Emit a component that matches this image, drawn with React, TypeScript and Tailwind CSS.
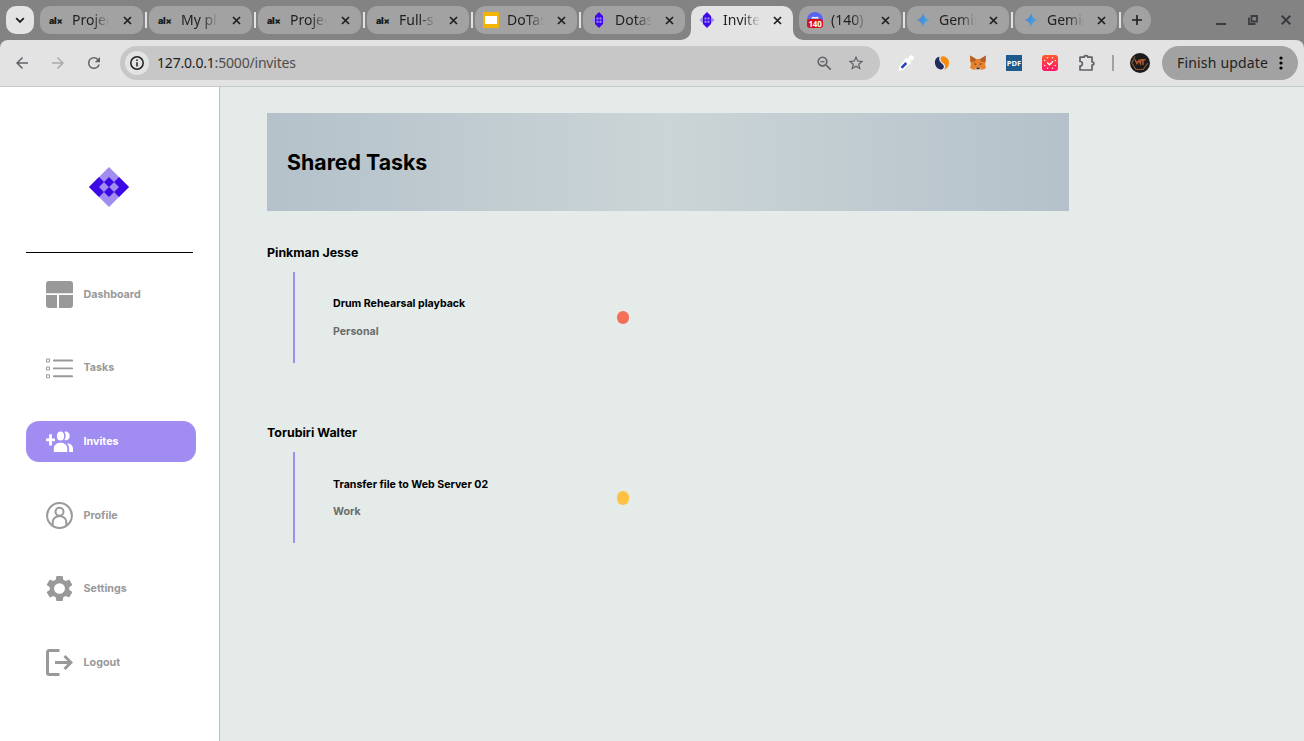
import React from "react";

const BROWSER = "font-['Noto_Sans',sans-serif]";

function AlxIcon() {
  return (
    <span className="w-4 h-4 pl-px flex items-center font-['Inter',sans-serif] font-black text-[9px] leading-none tracking-[-0.3px] text-[#151b1b]">
      al<span className="text-[9px]">×</span>
    </span>
  );
}

function SlidesIcon() {
  return (
    <svg className="w-4 h-4 block" viewBox="0 0 16 16">
      <rect width="16" height="16" rx="1" fill="#f5b400" />
      <rect x="2" y="4" width="12" height="8" fill="#fff" />
    </svg>
  );
}

function Diamond({ className }: { className: string }) {
  return (
    <svg className={className} viewBox="0 0 40 40" preserveAspectRatio="none">
      <path d="M20 0L40 20L20 40L0 20Z" fill="#a18cf2" />
      <path d="M10 10L20 20L10 30L0 20Z" fill="#3b0ae5" />
      <path d="M30 10L40 20L30 30L20 20Z" fill="#3b0ae5" />
      <path d="M15 15L20 20L15 25L10 20ZM25 15L30 20L25 25L20 20Z" fill="#a18cf2" />
      <path d="M20 10L25 15L20 20L15 15ZM20 20L25 25L20 30L15 25Z" fill="#3b0ae5" />
    </svg>
  );
}

function DiamondTabIcon() {
  return (
    <svg className="w-4 h-4 block" viewBox="0 0 16 16">
      <path d="M8 1L15.500 8L8 15L0.500 8Z" fill="#a18cf2" />
      <path d="M8 0L12 4V12L8 16L4 12V4Z" fill="#3b0ae5" />
      <path d="M5.500 5.500h2v2h-2zM8.500 5.500h2v2h-2zM5.500 8.700h2v2h-2zM8.500 8.700h2v2h-2z" fill="#a18cf2" />
    </svg>
  );
}

function DiscordIcon() {
  return (
    <span className="relative block w-4 h-4">
      <svg className="w-4 h-4 block" viewBox="0 0 16 16">
        <circle cx="8" cy="8" r="8" fill="#5865f2" />
        <path d="M4 6.500C5 4.600 6.200 4.400 7 4.900h2c1-.5 2.200-.3 3 1.600z" fill="#fff" />
      </svg>
      <span className="absolute left-0 top-[7px] w-4 h-[9px] rounded-[3px] bg-[#d80f16] text-white text-[8px] leading-[9px] tracking-[-0.2px] font-bold text-center">140</span>
    </span>
  );
}

function GeminiIcon() {
  return (
    <svg className="w-4 h-4 block" viewBox="0 0 16 16">
      <defs>
        <linearGradient id="gem" x1="0" y1="0" x2="1" y2="0.5">
          <stop offset="0.15" stopColor="#8b76c8" />
          <stop offset="0.5" stopColor="#3f8fdc" />
          <stop offset="1" stopColor="#55a8d8" />
        </linearGradient>
      </defs>
      <path d="M8 1C8.800 5 11 7.200 15 8C11 8.800 8.800 11 8 15C7.200 11 5 8.800 1 8C5 7.200 7.200 5 8 1Z" fill="url(#gem)" />
    </svg>
  );
}

type TabInfo = { title: string; icon: React.ReactNode; wide?: boolean; active?: boolean; sep?: boolean };

const tabs: TabInfo[] = [
  { title: "Projec", icon: <AlxIcon />, wide: true, sep: true },
  { title: "My pla", icon: <AlxIcon />, wide: true, sep: true },
  { title: "Projec", icon: <AlxIcon />, wide: true, sep: true },
  { title: "Full-s", icon: <AlxIcon />, sep: true },
  { title: "DoTas", icon: <SlidesIcon />, sep: true },
  { title: "Dotas", icon: <DiamondTabIcon /> },
  { title: "Invite", icon: <DiamondTabIcon />, active: true },
  { title: "(140) ", icon: <DiscordIcon />, sep: true },
  { title: "Gemin", icon: <GeminiIcon />, sep: true },
  { title: "Gemin", icon: <GeminiIcon />, sep: true },
];

function Tab({ tab }: { tab: TabInfo }) {
  return (
    <>
      <div
        className={`relative flex shrink-0 items-center pl-2 ${tab.wide ? "w-[103px]" : "w-[102px]"} ${
          tab.active ? "h-[34px] pb-[6px] rounded-t-[10px] bg-[#e3e3e3]" : "h-7 rounded-[10px] bg-[#a2a2a2]"
        }`}
      >
        {tab.active && (
          <>
            <svg className="absolute -left-[10px] bottom-0 w-[10px] h-[10px]" viewBox="0 0 10 10">
              <path d="M10 0V10H0A10 10 0 0 0 10 0Z" fill="#e3e3e3" />
            </svg>
            <svg className="absolute -right-[10px] bottom-0 w-[10px] h-[10px]" viewBox="0 0 10 10">
              <path d="M0 0V10H10A10 10 0 0 1 0 0Z" fill="#e3e3e3" />
            </svg>
          </>
        )}
        {tab.icon}
        <span className="ml-2 w-[37px] overflow-hidden whitespace-nowrap text-[14px] leading-5 text-[#1f1f1f] [mask-image:linear-gradient(to_right,#000_55%,transparent)]">
          {tab.title}
        </span>
        <svg className={`w-[9px] h-[9px] ${tab.wide ? "ml-[13.500px]" : "ml-[12.500px]"}`} viewBox="0 0 9 9">
          <path d="M1 1L8 8M8 1L1 8" stroke="#1f1f1f" strokeWidth="1.700" />
        </svg>
      </div>
      <div className="w-[6px] h-7 shrink-0 flex items-center justify-center">
        {tab.sep && <div className="w-[2px] h-4 bg-[#e3e3e3]" />}
      </div>
    </>
  );
}

function TabStrip() {
  return (
    <div className="flex h-10 bg-[#838383] pl-[6px] pt-[6px]">
      <div className="w-7 h-7 mr-[6px] shrink-0 rounded-[10px] bg-[#e3e3e3] flex items-center justify-center">
        <svg className="w-[10px] h-[7px]" viewBox="0 0 10 7">
          <path d="M1.200 1.200L5 5L8.800 1.200" fill="none" stroke="#1f1f1f" strokeWidth="1.800" />
        </svg>
      </div>
      {tabs.map((t, i) => (
        <Tab key={i} tab={t} />
      ))}
      <div className="w-7 h-7 shrink-0 rounded-full bg-[#a2a2a2] flex items-center justify-center">
        <svg className="w-[10px] h-[10px]" viewBox="0 0 10 10">
          <path d="M5 0V10M0 5H10" stroke="#1f1f1f" strokeWidth="1.600" />
        </svg>
      </div>
      <div className="ml-auto flex h-7 items-center pr-[13px]">
        <svg className="w-[10px] h-[10px]" viewBox="0 0 10 10">
          <path d="M0 9H10" stroke="#3b3c40" strokeWidth="2" />
        </svg>
        <svg className="ml-[22px] w-[10px] h-[10px]" viewBox="0 0 10 10">
          <path d="M1 2.500V9H7.500M3.500 1H9V6.500H3.500Z" fill="none" stroke="#3b3c40" strokeWidth="1.800" />
        </svg>
        <svg className="ml-[23px] w-[10px] h-[10px]" viewBox="0 0 10 10">
          <path d="M0.700 0.700L9.300 9.300M9.300 0.700L0.700 9.300" stroke="#3b3c40" strokeWidth="2" />
        </svg>
      </div>
    </div>
  );
}

function Material({ d, className }: { d: string; className: string }) {
  return (
    <svg className={className} viewBox="0 0 24 24" fill="currentColor">
      <path d={d} />
    </svg>
  );
}

const BACK = "M20 11H7.830l5.590-5.590L12 4l-8 8 8 8 1.410-1.410L7.830 13H20v-2z";
const FWD = "M12 4l-1.410 1.410L16.170 11H4v2h12.170l-5.580 5.590L12 20l8-8z";
const RELOAD =
  "M17.650 6.350A7.958 7.958 0 0 0 12 4a8 8 0 1 0 7.730 10h-2.080A6 6 0 1 1 12 6c1.660 0 3.140.69 4.220 1.780L13 11h7V4l-2.350 2.350z";
const ZOOM =
  "M15.500 14h-.79l-.28-.27A6.471 6.471 0 0 0 16 9.500 6.500 6.500 0 1 0 9.500 16c1.610 0 3.090-.59 4.230-1.570l.27.28v.79l5 4.990L20.490 19l-4.990-5zm-6 0C7.010 14 5 11.990 5 9.500S7.010 5 9.500 5 14 7.010 14 9.500 11.990 14 9.500 14zM7 8.700h5v1.600H7z";
const STAR =
  "M22 9.240l-7.190-.62L12 2 9.190 8.630 2 9.240l5.460 4.730L5.820 21 12 17.270 18.180 21l-1.630-7.030L22 9.240zM12 15.400l-3.760 2.270 1-4.280-3.320-2.880 4.380-.38L12 6.100l1.710 4.040 4.380.38-3.320 2.880 1 4.280L12 15.400z";
const GEAR =
  "M19.140 12.940c.04-.3.060-.61.060-.94 0-.32-.02-.64-.07-.94l2.030-1.580c.18-.14.23-.41.12-.61l-1.920-3.320c-.12-.22-.37-.29-.59-.22l-2.390.96c-.5-.38-1.030-.7-1.620-.94l-.36-2.540c-.04-.24-.24-.41-.48-.41h-3.840c-.24 0-.43.17-.47.41l-.36 2.540c-.59.24-1.130.57-1.620.94l-2.390-.96c-.22-.08-.47 0-.59.22L2.740 8.870c-.12.21-.08.47.12.61l2.030 1.580c-.05.3-.09.63-.09.94s.02.64.07.94l-2.030 1.580c-.18.14-.23.41-.12.61l1.920 3.320c.12.22.37.29.59.22l2.390-.96c.5.38 1.030.7 1.620.94l.36 2.540c.05.24.24.41.48.41h3.840c.24 0 .44-.17.47-.41l.36-2.540c.59-.24 1.130-.56 1.620-.94l2.390.96c.22.08.47 0 .59-.22l1.920-3.320c.12-.22.070-.47-.12-.61l-2.010-1.580z";

function Extensions() {
  return (
    <div className="flex items-center ml-[18px]">
      <svg className="w-4 h-4" viewBox="0 0 16 16">
        <path d="M8.500 4L12 7.500L5 14.300L1.500 15L2 11.500Z" fill="#fff" stroke="#fff" strokeWidth="1.500" strokeLinejoin="round" />
        <path d="M7.500 3.500L12.500 8.500M9.500 6.500L13 3" stroke="#fff" strokeWidth="2.800" />
        <circle cx="13.200" cy="2.800" r="2.500" fill="#fff" />
        <path d="M3.500 12.800L8.300 8" stroke="#2947b8" strokeWidth="2.600" />
      </svg>
      <svg className="w-4 h-4 ml-5" viewBox="0 0 16 16">
        <path d="M5.500 1.800C2 2.500 .6 5 1 8.500C1.500 12 4 14.500 7.500 14.500C10.600 13.500 10.500 10.800 8.300 9C5.500 6.800 4.500 4.500 5.500 1.800Z" fill="#1f2d5c" />
        <path d="M8 1.200C12 .8 15 4 15 7.500C15 11 13 14 10 14.600C12 12.500 11.500 10 9.500 8.300C6.500 6 5.500 3 8 1.200Z" fill="#f68b0c" />
      </svg>
      <svg className="w-[18px] h-4 ml-[19px]" viewBox="0 0 18 16">
        <path d="M1 .5L7 4H11L17 .5L17 6L16 9L17 13L13 15L10.500 14.500H7.500L5 15L1 13L2 9L1 6Z" fill="#e8812c" />
        <path d="M1 .5L7 4L6 6.500L2 7ZM17 .5L11 4L12 6.500L16 7Z" fill="#b0602c" />
        <path d="M5 8.300L7.500 9L6.500 10ZM13 8.300L10.500 9L11.500 10Z" fill="#24324a" />
        <path d="M5 14.600L7 12.300H11L13 14.600L11 15H7Z" fill="#d6b39a" />
        <path d="M7.500 12.500H10.500V14H7.500Z" fill="#33343b" />
      </svg>
      <div className="w-4 h-4 ml-[19px] bg-[#1f5a8c] text-white text-[7.500px] leading-4 font-bold text-center font-['Open_Sans',sans-serif]">PDF</div>
      <svg className="w-4 h-4 ml-5" viewBox="0 0 16 16">
        <defs>
          <linearGradient id="clk" x1="0" y1="0" x2="0" y2="1">
            <stop offset="0" stopColor="#ff5a2c" />
            <stop offset="1" stopColor="#ff1668" />
          </linearGradient>
        </defs>
        <rect width="16" height="16" rx="3" fill="url(#clk)" />
        <path d="M5.200 7.500L7.500 9.800L11 6.300" fill="none" stroke="#fff" strokeWidth="1.300" />
        <g fill="#ffe5e0">
          <circle cx="5.500" cy="2.700" r=".8" /><circle cx="10.500" cy="2.700" r=".8" />
          <circle cx="5.500" cy="13.300" r=".8" /><circle cx="10.500" cy="13.300" r=".8" />
          <circle cx="2.700" cy="5.500" r=".8" /><circle cx="13.300" cy="5.500" r=".8" />
          <circle cx="2.700" cy="10.500" r=".8" /><circle cx="13.300" cy="10.500" r=".8" />
        </g>
      </svg>
      <svg className="w-[18px] h-[18px] ml-5" viewBox="0 0 18 18">
        <path d="M2 3.200H6.200C6.200 1.200 9.800 1.200 9.800 3.200H14V8C16.500 8 16.500 11 14 11V16H2V12C5.200 12 5.200 7.500 2 7.500Z" fill="none" stroke="#5f6368" strokeWidth="1.700" strokeLinejoin="round" />
      </svg>
      <div className="w-[2px] h-4 ml-[16px] bg-[#a2a2a2]" />
      <svg className="w-5 h-5 ml-4" viewBox="0 0 20 20">
        <circle cx="10" cy="10" r="10" fill="#1c1a1c" />
        <path d="M5 3.500L1.800 10L6 16.500H13L18 10" fill="none" stroke="#8a5c3c" strokeWidth="1.100" />
        <path d="M5 6.500L7 10.500L9 7.500L10.500 10.500L11 6.800H15.500M13 6.800V12" fill="none" stroke="#b05a30" strokeWidth="1.500" />
      </svg>
    </div>
  );
}

function Toolbar() {
  return (
    <div className="bg-[#838383]">
      <div className="flex items-center h-[47px] bg-[#e3e3e3] rounded-t-[8px] border-b border-[#c5c9c8] pl-[13px] pr-[6px] text-[#5f6368]">
        <Material d={BACK} className="w-[18px] h-[18px]" />
        <Material d={FWD} className="w-[18px] h-[18px] ml-[18px] text-[#ababab]" />
        <Material d={RELOAD} className="w-[18px] h-[18px] ml-[18px]" />
        <div className="ml-[17px] flex items-center w-[760px] h-[34px] shrink-0 rounded-full bg-[#c7c7c7] pl-[5px] pr-[15px]">
          <div className="w-6 h-6 rounded-full bg-[#e3e3e3] flex items-center justify-center">
            <svg className="w-[14px] h-[14px]" viewBox="0 0 14 14">
              <circle cx="7" cy="7" r="6.200" fill="none" stroke="#1f1f1f" strokeWidth="1.500" />
              <path d="M7 6.200V10.500M7 3.400V5" stroke="#1f1f1f" strokeWidth="1.500" />
            </svg>
          </div>
          <span className="ml-2 text-[14px] leading-5 tracking-[-0.19px] text-[#1f1f1f]">
            127.0.0.1<span className="text-[#4d4d4d]">:5000/invites</span>
          </span>
          <Material d={ZOOM} className="ml-auto w-[19px] h-[19px]" />
          <Material d={STAR} className="ml-[13px] w-[18px] h-[18px]" />
        </div>
        <Extensions />
        <div className="ml-auto flex items-center w-[136px] h-[34px] shrink-0 rounded-full bg-[#a2a2a2] pl-[15px] text-[#1f1f1f]">
          <span className="text-[14px] leading-5 tracking-[0.18px] whitespace-nowrap w-[92px]">Finish update</span>
          <svg className="ml-[10px] w-1 h-[14px]" viewBox="0 0 4 14">
            <circle cx="2" cy="2" r="1.600" /><circle cx="2" cy="7" r="1.600" /><circle cx="2" cy="12" r="1.600" />
          </svg>
        </div>
      </div>
    </div>
  );
}

function DashboardIcon() {
  return (
    <svg className="w-[27px] h-[27px]" viewBox="0 0 27 27" fill="currentColor">
      <path d="M0 12.200V3A3 3 0 0 1 3 0H24A3 3 0 0 1 27 3V12.200ZM0 14H11V27H3A3 3 0 0 1 0 24ZM13 14H27V24A3 3 0 0 1 24 27H13Z" />
    </svg>
  );
}

function TasksIcon() {
  return (
    <svg className="w-[27px] h-[27px]" viewBox="0 0 27 27" fill="none" stroke="currentColor">
      <path d="M7.900 5.500H26.100M7.900 13.400H26.100M7.900 21.300H26.100" strokeWidth="1.900" strokeLinecap="round" />
      <path d="M.5 4H3.500V7H.5ZM.5 12H3.500V15H.5ZM.5 19.800H3.500V22.800H.5Z" strokeWidth="1" />
    </svg>
  );
}

function InvitesIcon() {
  return (
    <svg className="w-[27px] h-[27px]" viewBox="0 0 27 27" fill="currentColor">
      <path d="M3.100 6.300H5.900V10.600H9V13.200H5.900V17.600H3.100V13.200H0V10.600H3.100Z" />
      <ellipse cx="14.500" cy="7.900" rx="3.600" ry="4.500" />
      <path d="M7.800 24V20.500C7.800 12.800 21.300 12.800 21.300 20.500V24Z" />
      <path d="M18.400 3.700C21 2.900 23.700 4.600 23.700 7.900C23.700 11.200 21 12.900 18.400 12.100C20.100 9.500 20.100 6.300 18.400 3.700Z" />
      <path d="M20.900 15.200C24.400 15.500 27 17.300 27 20.600V24H23.100V20.600C23.100 18.400 22.300 16.700 20.900 15.200Z" />
    </svg>
  );
}

function ProfileIcon() {
  return (
    <svg className="w-[27px] h-[27px]" viewBox="0 0 27 27" fill="none" stroke="currentColor" strokeWidth="2">
      <circle cx="13.500" cy="13.500" r="12.400" />
      <circle cx="13.500" cy="9.800" r="4" />
      <path d="M6.700 23.500V20A6.800 6 0 0 1 20.300 20V23.500" />
    </svg>
  );
}

function SettingsIcon() {
  return (
    <svg className="w-[27px] h-[27px]" viewBox="2.100 1.700 19.800 20.600" preserveAspectRatio="none" fill="currentColor" fillRule="evenodd">
      <path d={GEAR + "M12 16A4 4 0 1 1 12 8A4 4 0 0 1 12 16Z"} />
    </svg>
  );
}

function LogoutIcon() {
  return (
    <svg className="w-[27px] h-[27px]" viewBox="0 0 27 27" fill="none" stroke="currentColor" strokeWidth="3">
      <path d="M13.500 1.500H3A1.500 1.500 0 0 0 1.500 3V24A1.500 1.500 0 0 0 3 25.500H13.500" />
      <path d="M9 13.500H24.500M18.500 7L25 13.500L18.500 20" strokeWidth="2.900" />
    </svg>
  );
}

const nav = [
  { label: "Dashboard", icon: <DashboardIcon />, nudge: "" },
  { label: "Tasks", icon: <TasksIcon />, nudge: "pb-px" },
  { label: "Invites", icon: <InvitesIcon />, nudge: "", active: true },
  { label: "Profile", icon: <ProfileIcon />, nudge: "pt-px" },
  { label: "Settings", icon: <SettingsIcon />, nudge: "pt-px" },
  { label: "Logout", icon: <LogoutIcon />, nudge: "pt-px" },
];

function Sidebar() {
  return (
    <aside className="w-[220px] shrink-0 bg-white border-r border-[#b9c1c6] pl-[26px] pt-20">
      <Diamond className="block w-10 h-10 ml-[63px]" />
      <div className="mt-[45px] w-[167px] h-px bg-black" />
      <nav className="mt-[21px] flex flex-col gap-[32.600px]">
        {nav.map((n) => (
          <a
            key={n.label}
            className={`flex items-center w-[170px] h-[41px] pl-5 gap-[10.500px] rounded-[13px] text-[10.720px] leading-4 font-bold ${
              n.active ? "bg-[#a18cf2] text-white" : "text-[#999999]"
            }`}
          >
            {n.icon}
            <span className={n.nudge}>{n.label}</span>
          </a>
        ))}
      </nav>
    </aside>
  );
}

const people = [
  {
    name: "Pinkman Jesse",
    task: "Drum Rehearsal playback",
    tag: "Personal",
    dot: "h-[13px] bg-[#f56e57]",
    spacing: "pb-0",
    gap: "mt-3",
  },
  {
    name: "Torubiri Walter",
    task: "Transfer file to Web Server 02",
    tag: "Work",
    dot: "h-[14px] bg-[#ffc045]",
    spacing: "pt-[1px]",
    gap: "mt-[11px]",
  },
];

export default function App() {
  return (
    <div className="w-[1304px] h-[741px] overflow-hidden flex flex-col">
      <header className={BROWSER}>
        <TabStrip />
        <Toolbar />
      </header>
      <div className="flex flex-1 font-['Inter',sans-serif]">
        <Sidebar />
        <main className="flex-1 bg-[#e5ebe9] pl-[47px] pt-[26px]">
          <div className="w-[802px] h-[98px] pl-5 flex items-center bg-[linear-gradient(to_right,#b4c1ca,#cbd5d7_50%,#b4c1ca)]">
            <h1 className="text-[21.330px] leading-7 font-bold text-black">Shared Tasks</h1>
          </div>
          <div className="pt-8">
            {people.map((p) => (
              <section key={p.name} className="h-[180px]">
                <h2 className="text-[12.400px] leading-[19px] font-bold text-black">{p.name}</h2>
                <div className="mt-[10px] ml-[26px] h-[91px] w-[336px] border-l-2 border-[#a18cf2] pl-[38px] flex items-center justify-between">
                  <div className={`text-[10.620px] leading-4 font-bold ${p.spacing}`}>
                    <div className="text-black">{p.task}</div>
                    <div className={`text-[#6b6b6b] ${p.gap}`}>{p.tag}</div>
                  </div>
                  <div className={`w-3 rounded-full ${p.dot}`} />
                </div>
              </section>
            ))}
          </div>
        </main>
      </div>
    </div>
  );
}
